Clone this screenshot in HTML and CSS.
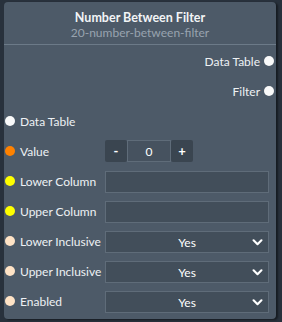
FILE: index.html
```html
<!DOCTYPE html>
<html lang="en">
<head>
    <meta charset="UTF-8">
    <title>Number Between Filter</title>
    <link rel="stylesheet" href="styles.css">
</head>
<body>

    <div class="node">
        <!-- Header -->
        <div class="node-header">
            <div class="node-title">Number Between Filter</div>
            <div class="node-id">20-number-between-filter</div>
        </div>

        <!-- Outputs -->
        <div class="row output">
            <span class="label">Data Table</span>
            <span class="dot dot-white"></span>
        </div>
        <div class="row output">
            <span class="label">Filter</span>
            <span class="dot dot-white"></span>
        </div>

        <!-- Inputs -->
        <div class="row">
            <span class="dot dot-white"></span>
            <span class="label">Data Table</span>
        </div>
        <div class="row">
            <span class="dot dot-orange"></span>
            <span class="label">Value</span>
            <div class="stepper">
                <button class="step-btn">-</button>
                <input class="step-input" type="text" value="0">
                <button class="step-btn">+</button>
            </div>
        </div>
        <div class="row">
            <span class="dot dot-yellow"></span>
            <span class="label">Lower Column</span>
            <input class="text-input" type="text">
        </div>
        <div class="row">
            <span class="dot dot-yellow"></span>
            <span class="label">Upper Column</span>
            <input class="text-input" type="text">
        </div>
        <div class="row">
            <span class="dot dot-peach"></span>
            <span class="label">Lower Inclusive</span>
            <div class="select"><span>Yes</span><svg class="chevron" viewBox="0 0 12 8"><path d="M1.5 1.5 L6 6 L10.5 1.5" /></svg></div>
        </div>
        <div class="row">
            <span class="dot dot-peach"></span>
            <span class="label">Upper Inclusive</span>
            <div class="select"><span>Yes</span><svg class="chevron" viewBox="0 0 12 8"><path d="M1.5 1.5 L6 6 L10.5 1.5" /></svg></div>
        </div>
        <div class="row">
            <span class="dot dot-peach"></span>
            <span class="label">Enabled</span>
            <div class="select"><span>Yes</span><svg class="chevron" viewBox="0 0 12 8"><path d="M1.5 1.5 L6 6 L10.5 1.5" /></svg></div>
        </div>
    </div>

</body>
</html>
```

FILE: styles.css
```css
body {
    margin: 0;
    width: 282px;
    height: 322px;
    overflow: hidden;
    background-color: #28313c;
    font-family: 'Lato', 'Open Sans', sans-serif;
    color: #fff;
}

.node {
    margin: 2px 0 0 4px;
    width: 272px;
    height: 317px;
    box-sizing: border-box;
    background-color: #4d5a68;
    border-radius: 4px;
    box-shadow: 2px 1px 2px rgba(0, 0, 0, 0.45);
    padding-bottom: 2px;
}

.node-header {
    height: 43px;
    border-bottom: 1px solid #6c7a88;
    text-align: center;
    padding-top: 8px;
    box-sizing: border-box;
}

.node-title {
    font-size: 12.5px;
    font-weight: bold;
    line-height: 15px;
    color: #f2f4f6;
}

.node-id {
    font-size: 12px;
    line-height: 15px;
    color: #98a3af;
}

.row {
    height: 30px;
    display: flex;
    align-items: center;
    font-size: 12px;
    padding-left: 1px;
}

.row.output {
    justify-content: flex-end;
    padding-left: 0;
}

.row:nth-child(2) {
    margin-top: 1px;
}

.label {
    color: #eef1f4;
}

.row > .label {
    width: 85px;
    margin-left: 5px;
}

.row.output > .label {
    width: auto;
    margin: 0 4px 0 0;
}

.dot {
    width: 10px;
    height: 10px;
    border-radius: 50%;
    flex-shrink: 0;
}

.dot-white  { background-color: #fafafa; }
.dot-orange { background-color: #ff8200; }
.dot-yellow { background-color: #ffff00; }
.dot-peach  { background-color: #ffe3c6; }

.row.output .dot {
    margin-right: 2px;
}

/* Number stepper */
.stepper {
    display: flex;
    height: 22px;
}

.step-btn {
    width: 22px;
    height: 22px;
    border: none;
    border-radius: 2px;
    background-color: #3a4550;
    color: #fff;
    font-family: inherit;
    font-size: 13px;
    font-weight: bold;
    padding: 0;
}

.step-input {
    width: 44px;
    height: 22px;
    box-sizing: border-box;
    border: 1px solid #5f6c79;
    background-color: #46525f;
    color: #fff;
    text-align: center;
    font-family: inherit;
    font-size: 12px;
    padding: 0;
}

.text-input {
    width: 164px;
    height: 22px;
    box-sizing: border-box;
    border: 1px solid #5f6c79;
    background-color: #424e5a;
    color: #fff;
    padding: 0 4px;
    margin-top: 2px;
}

.select {
    position: relative;
    width: 164px;
    height: 22px;
    box-sizing: border-box;
    border: 1px solid #5f6c79;
    background-color: #424e5a;
    display: flex;
    align-items: center;
    justify-content: center;
    font-size: 12px;
    margin-top: 2px;
}

.chevron {
    position: absolute;
    right: 5px;
    top: 7px;
    width: 11px;
    height: 7px;
    fill: none;
    stroke: #fff;
    stroke-width: 2.4;
    stroke-linecap: round;
    stroke-linejoin: round;
}
```
